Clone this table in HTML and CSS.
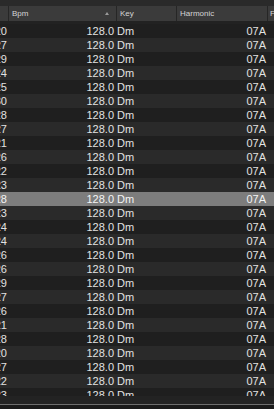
FILE: index.html
```html
<!DOCTYPE html>
<html>
<head>
<meta charset="utf-8">
<link rel="stylesheet" href="styles.css">
</head>
<body>
<div class="panel">
  <div class="topstrip"></div>
  <div class="header">
    <div class="hcell c0"></div>
    <div class="hcell c1"><span>Bpm</span><span class="arrow"></span></div>
    <div class="hcell c2"><span>Key</span></div>
    <div class="hcell c3"><span>Harmonic</span></div>
    <div class="hcell c4"><span>F</span></div>
  </div>
  <div class="gap"></div>
  <div class="rows">
    <div class="row"><div class="cell c0">20</div><div class="cell c1">128.0</div><div class="cell c2">Dm</div><div class="cell c3">07A</div></div>
    <div class="row"><div class="cell c0">27</div><div class="cell c1">128.0</div><div class="cell c2">Dm</div><div class="cell c3">07A</div></div>
    <div class="row"><div class="cell c0">29</div><div class="cell c1">128.0</div><div class="cell c2">Dm</div><div class="cell c3">07A</div></div>
    <div class="row"><div class="cell c0">24</div><div class="cell c1">128.0</div><div class="cell c2">Dm</div><div class="cell c3">07A</div></div>
    <div class="row"><div class="cell c0">25</div><div class="cell c1">128.0</div><div class="cell c2">Dm</div><div class="cell c3">07A</div></div>
    <div class="row"><div class="cell c0">30</div><div class="cell c1">128.0</div><div class="cell c2">Dm</div><div class="cell c3">07A</div></div>
    <div class="row"><div class="cell c0">28</div><div class="cell c1">128.0</div><div class="cell c2">Dm</div><div class="cell c3">07A</div></div>
    <div class="row"><div class="cell c0">27</div><div class="cell c1">128.0</div><div class="cell c2">Dm</div><div class="cell c3">07A</div></div>
    <div class="row"><div class="cell c0">21</div><div class="cell c1">128.0</div><div class="cell c2">Dm</div><div class="cell c3">07A</div></div>
    <div class="row"><div class="cell c0">26</div><div class="cell c1">128.0</div><div class="cell c2">Dm</div><div class="cell c3">07A</div></div>
    <div class="row"><div class="cell c0">22</div><div class="cell c1">128.0</div><div class="cell c2">Dm</div><div class="cell c3">07A</div></div>
    <div class="row"><div class="cell c0">23</div><div class="cell c1">128.0</div><div class="cell c2">Dm</div><div class="cell c3">07A</div></div>
    <div class="row sel"><div class="cell c0">28</div><div class="cell c1">128.0</div><div class="cell c2">Dm</div><div class="cell c3">07A</div></div>
    <div class="row"><div class="cell c0">23</div><div class="cell c1">128.0</div><div class="cell c2">Dm</div><div class="cell c3">07A</div></div>
    <div class="row"><div class="cell c0">24</div><div class="cell c1">128.0</div><div class="cell c2">Dm</div><div class="cell c3">07A</div></div>
    <div class="row"><div class="cell c0">24</div><div class="cell c1">128.0</div><div class="cell c2">Dm</div><div class="cell c3">07A</div></div>
    <div class="row"><div class="cell c0">26</div><div class="cell c1">128.0</div><div class="cell c2">Dm</div><div class="cell c3">07A</div></div>
    <div class="row"><div class="cell c0">26</div><div class="cell c1">128.0</div><div class="cell c2">Dm</div><div class="cell c3">07A</div></div>
    <div class="row"><div class="cell c0">29</div><div class="cell c1">128.0</div><div class="cell c2">Dm</div><div class="cell c3">07A</div></div>
    <div class="row"><div class="cell c0">27</div><div class="cell c1">128.0</div><div class="cell c2">Dm</div><div class="cell c3">07A</div></div>
    <div class="row"><div class="cell c0">26</div><div class="cell c1">128.0</div><div class="cell c2">Dm</div><div class="cell c3">07A</div></div>
    <div class="row"><div class="cell c0">21</div><div class="cell c1">128.0</div><div class="cell c2">Dm</div><div class="cell c3">07A</div></div>
    <div class="row"><div class="cell c0">28</div><div class="cell c1">128.0</div><div class="cell c2">Dm</div><div class="cell c3">07A</div></div>
    <div class="row"><div class="cell c0">20</div><div class="cell c1">128.0</div><div class="cell c2">Dm</div><div class="cell c3">07A</div></div>
    <div class="row"><div class="cell c0">27</div><div class="cell c1">128.0</div><div class="cell c2">Dm</div><div class="cell c3">07A</div></div>
    <div class="row"><div class="cell c0">22</div><div class="cell c1">128.0</div><div class="cell c2">Dm</div><div class="cell c3">07A</div></div>
    <div class="row"><div class="cell c0">23</div><div class="cell c1">128.0</div><div class="cell c2">Dm</div><div class="cell c3">07A</div></div>
  </div>
  <div class="hscroll"></div>
  <div class="bottomline"></div>
  <div class="bottom"></div>
</div>
</body>
</html>
```

FILE: styles.css
```css
html, body {
  margin: 0;
  padding: 0;
  background: #1c1c1c;
}
.panel {
  width: 274px;
  height: 409px;
  overflow: hidden;
  display: flex;
  flex-direction: column;
  font-family: "Liberation Sans", Arial, sans-serif;
}
.topstrip {
  height: 6px;
  background: #2a2a2a;
  flex: none;
}
.header {
  display: flex;
  height: 15px;
  background: #3b3b3b;
  flex: none;
  font-size: 8px;
  color: #d4d4d4;
}
.hcell {
  display: flex;
  align-items: center;
  border-right: 1px solid #262626;
  padding-left: 3px;
  box-sizing: border-box;
  white-space: nowrap;
  overflow: hidden;
}
.header .c0 { width: 9px; }
.header .c1 { width: 108px; justify-content: space-between; padding-right: 7px; }
.header .c2 { width: 60px; }
.header .c3 { width: 91px; }
.header .c4 { flex: 1; border-right: none; padding-left: 2px; }
.arrow {
  width: 0;
  height: 0;
  border-left: 2.5px solid transparent;
  border-right: 2.5px solid transparent;
  border-bottom: 3px solid #9a9a9a;
}
.gap {
  height: 3px;
  background: #222222;
  flex: none;
}
.rows {
  height: 372px;
  overflow: hidden;
  flex: none;
}
.row {
  display: flex;
  height: 14px;
  align-items: center;
  font-size: 11px;
  color: #e2e2e2;
  background: #1f1f1f;
}
.row:nth-child(even) {
  background: #2a2a2a;
}
.row.sel {
  background: #7d7d7d;
  color: #f4f4f4;
}
.cell {
  white-space: nowrap;
  overflow: hidden;
  box-sizing: border-box;
  line-height: 14px;
}
.row .c0 { width: 9px; display: flex; justify-content: flex-end; padding-right: 2px; }
.row .c1 { width: 108px; text-align: right; padding-right: 3px; }
.row .c2 { width: 60px; padding-left: 0px; }
.row .c3 { width: 91px; text-align: right; padding-right: 2px; }
.hscroll {
  height: 8px;
  background: #232323;
  flex: none;
}
.bottomline {
  height: 1px;
  background: #6e6e6e;
  flex: none;
}
.bottom {
  flex: 1;
  background: #1a1a1a;
}
```
